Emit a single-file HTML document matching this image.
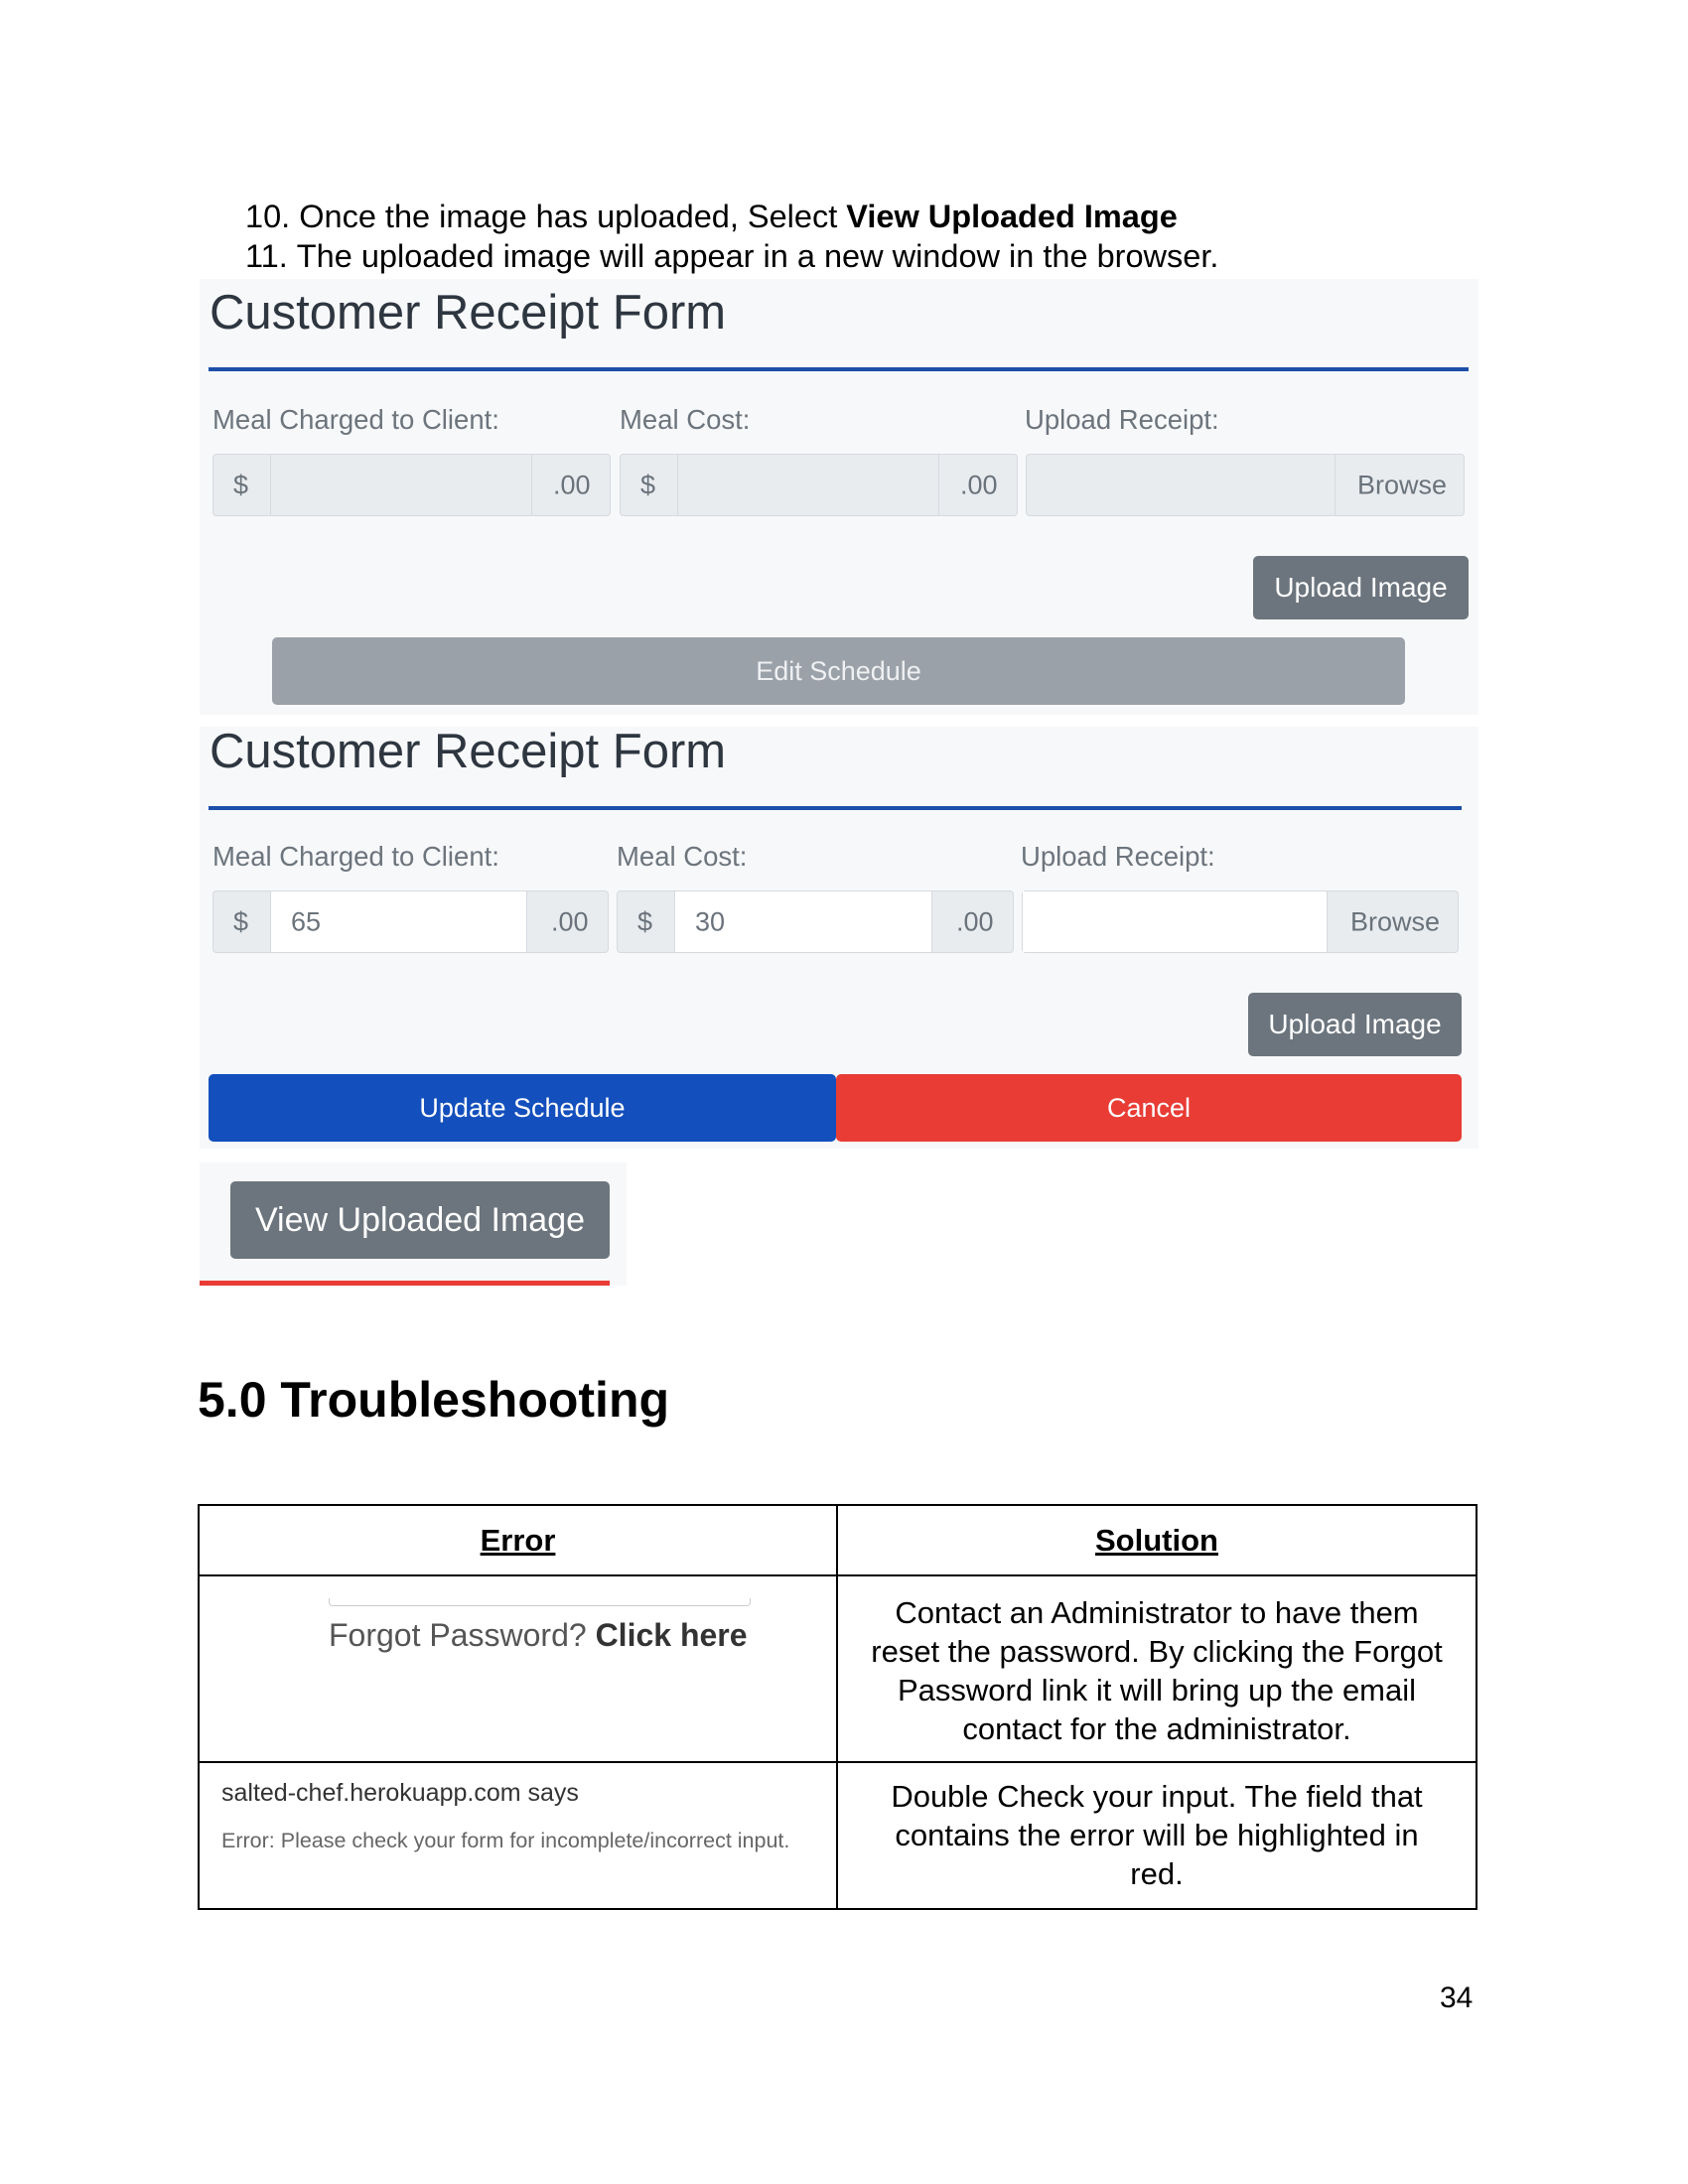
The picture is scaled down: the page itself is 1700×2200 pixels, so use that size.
<!DOCTYPE html>
<html><head><meta charset="utf-8"><style>
*{margin:0;padding:0;box-sizing:border-box}
body{width:1700px;height:2200px;background:#fff;position:relative;font-family:"Liberation Sans",sans-serif;overflow:hidden}
.a{position:absolute}
.p{font-size:32.5px;color:#000;white-space:nowrap;line-height:1}
.panel{position:absolute;background:#f7f8fa}
.title{position:absolute;font-size:49px;color:#2e3640;line-height:1;white-space:nowrap}
.line{position:absolute;height:4px;background:#1d4fa8}
.lbl{position:absolute;font-size:27.5px;color:#6c747c;line-height:1;white-space:nowrap}
.box{position:absolute;border:1.5px solid #d6dade;border-radius:4px;background:#e9ecef;color:#6a737b;font-size:27px}
.box span{position:absolute;top:50%;transform:translateY(-50%)}
.seg{position:absolute;top:0;bottom:0;border-left:1.5px solid #d6dade}
.btn{position:absolute;border-radius:5px;color:#fff;display:flex;align-items:center;justify-content:center;white-space:nowrap}
td{border:2px solid #000;vertical-align:top;text-align:center;font-size:31px;line-height:39px}
</style></head><body>
<div class="a p" style="left:247px;top:202px">10.&nbsp;Once the image has uploaded, Select <b>View Uploaded Image</b></div>
<div class="a p" style="left:247px;top:242px">11.&nbsp;The uploaded image will appear in a new window in the browser.</div>

<div class="panel" style="left:201px;top:281px;width:1288px;height:439px"></div>
<div class="title" style="left:211px;top:291px">Customer Receipt Form</div>
<div class="line" style="left:210px;top:370px;width:1269px"></div>
<div class="lbl" style="left:214px;top:409px">Meal Charged to Client:</div>
<div class="lbl" style="left:624px;top:409px">Meal Cost:</div>
<div class="lbl" style="left:1032px;top:409px">Upload Receipt:</div>
<div class="box" style="left:214px;top:457px;width:401px;height:63px"><span style="left:20px">$</span><div class="seg" style="left:57px"></div><div class="seg" style="left:320px"></div><span style="left:342px">.00</span></div>
<div class="box" style="left:624px;top:457px;width:401px;height:63px"><span style="left:20px">$</span><div class="seg" style="left:57px"></div><div class="seg" style="left:320px"></div><span style="left:342px">.00</span></div>
<div class="box" style="left:1033px;top:457px;width:442px;height:63px"><div class="seg" style="left:310px"></div><span style="left:333px">Browse</span></div>
<div class="btn" style="left:1262px;top:560px;width:217px;height:64px;background:#6c757d;font-size:28px">Upload Image</div>
<div class="btn" style="left:274px;top:642px;width:1141px;height:68px;background:#9ba1a8;color:#eef0f2;font-size:27px">Edit Schedule</div>

<div class="panel" style="left:201px;top:732px;width:1288px;height:425px"></div>
<div class="title" style="left:211px;top:733px">Customer Receipt Form</div>
<div class="line" style="left:210px;top:812px;width:1262px"></div>
<div class="lbl" style="left:214px;top:849px">Meal Charged to Client:</div>
<div class="lbl" style="left:621px;top:849px">Meal Cost:</div>
<div class="lbl" style="left:1028px;top:849px">Upload Receipt:</div>
<div class="box" style="left:214px;top:897px;width:399px;height:63px"><span style="left:20px">$</span><div class="seg" style="left:57px;right:81px;background:#fff;border-right:1.5px solid #d6dade"></div><span style="left:78px">65</span><span style="left:340px">.00</span></div>
<div class="box" style="left:621px;top:897px;width:400px;height:63px"><span style="left:20px">$</span><div class="seg" style="left:57px;right:81px;background:#fff;border-right:1.5px solid #d6dade"></div><span style="left:78px">30</span><span style="left:341px">.00</span></div>
<div class="box" style="left:1029px;top:897px;width:440px;height:63px"><div class="seg" style="left:0;right:131px;background:#fff;border-left:0;border-right:1.5px solid #d6dade"></div><span style="left:330px">Browse</span></div>
<div class="btn" style="left:1257px;top:1000px;width:215px;height:64px;background:#6c757d;font-size:28px">Upload Image</div>
<div class="btn" style="left:210px;top:1082px;width:632px;height:68px;background:#134fbd;font-size:27px">Update Schedule</div>
<div class="btn" style="left:842px;top:1082px;width:630px;height:68px;background:#e83c35;font-size:27px">Cancel</div>

<div class="panel" style="left:201px;top:1171px;width:430px;height:124px"></div>
<div class="btn" style="left:232px;top:1190px;width:382px;height:78px;background:#6c757d;font-size:34px">View Uploaded Image</div>
<div class="a" style="left:201px;top:1290px;width:413px;height:5px;background:#e83c35"></div>

<div class="a" style="left:199px;top:1385px;font-size:50px;font-weight:bold;line-height:1">5.0 Troubleshooting</div>

<table class="a" style="left:199px;top:1515px;width:1289px;height:409px;border-collapse:collapse">
<tr style="height:71px"><td style="width:643px;vertical-align:middle;font-weight:bold;text-decoration:underline">Error</td><td style="vertical-align:middle;font-weight:bold;text-decoration:underline">Solution</td></tr>
<tr style="height:188px"><td style="position:relative"><div class="a" style="left:130px;top:22px;width:425px;height:8px;border:1.5px solid #ccc;border-top:0;border-radius:0 0 4px 4px"></div><div class="a" style="left:130px;top:40px;font-size:32px;color:#555;white-space:nowrap">Forgot Password? <b style="color:#333">Click here</b></div></td>
<td style="padding:17px 22px 0">Contact an Administrator to have them reset the password. By clicking the Forgot Password link it will bring up the email contact for the administrator.</td></tr>
<tr><td style="position:relative;text-align:left"><div class="a" style="left:22px;top:18px;font-size:25px;color:#333;line-height:1">salted-chef.herokuapp.com says</div><div class="a" style="left:22px;top:68px;font-size:21.5px;color:#666;line-height:1;white-space:nowrap">Error: Please check your form for incomplete/incorrect input.</div></td>
<td style="padding:14px 34px 0">Double Check your input. The field that contains the error will be highlighted in red.</td></tr>
</table>

<div class="a p" style="left:1450px;top:1998px;font-size:30px">34</div>
</body></html>
